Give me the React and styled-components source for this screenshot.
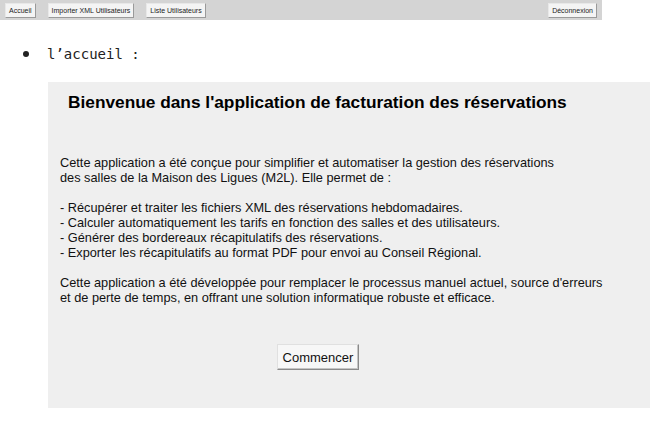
import React from "react";
import styled, { createGlobalStyle } from "styled-components";

const Global = createGlobalStyle`
  html, body { margin: 0; padding: 0; background: #ffffff; }
  body { font-family: "Liberation Sans", Arial, sans-serif; }
`;

const Toolbar = styled.div`
  width: 602px;
  height: 20px;
  background: #d4d4d4;
  display: flex;
  align-items: center;
  padding: 0 5px;
  box-sizing: border-box;
  gap: 12px;
`;

const NavButton = styled.button`
  font-family: "Liberation Sans", Arial, sans-serif;
  font-size: 7px;
  color: #222;
  background: #f4f4f4;
  border: 1px solid #9a9a9a;
  border-top-color: #e8e8e8;
  border-left-color: #e8e8e8;
  height: 15px;
  padding: 0 3px;
  margin-left: ${(p) => (p.$push ? "auto" : "0")};
  cursor: pointer;
`;

const BulletRow = styled.div`
  display: flex;
  align-items: center;
  margin: 24px 0 0 23px;
  height: 20px;
`;

const Dot = styled.span`
  width: 6px;
  height: 6px;
  border-radius: 50%;
  background: #222;
  margin-right: 18px;
`;

const BulletText = styled.span`
  font-family: "DejaVu Sans Mono", monospace;
  font-size: 14px;
  color: #222;
`;

const Panel = styled.div`
  margin: 18px 0 0 48px;
  width: 602px;
  height: 326px;
  background: #efefef;
  box-sizing: border-box;
  padding: 10px 12px 0 12px;
  display: flex;
  flex-direction: column;
`;

const Title = styled.h1`
  font-family: "Liberation Sans", Arial, sans-serif;
  font-size: 17.3px;
  font-weight: bold;
  color: #000;
  margin: 0 0 0 8px;
  line-height: 20px;
`;

const Body = styled.div`
  margin-top: 43px;
  font-family: "Liberation Sans", Arial, sans-serif;
  font-size: 12.75px;
  line-height: 15px;
  color: #111;
`;

const Para = styled.p`
  margin: 0 0 15px 0;
`;

const ButtonRow = styled.div`
  display: flex;
  padding-left: 217px;
  margin-top: 24px;
`;

const StartButton = styled.button`
  font-family: "Liberation Sans", Arial, sans-serif;
  font-size: 13px;
  color: #111;
  background: #f7f7f7;
  border: 1px solid #8a8a8a;
  border-top-color: #e0e0e0;
  border-left-color: #e0e0e0;
  box-shadow: inset -1px -1px 0 #c4c4c4;
  width: 82px;
  height: 26px;
  padding: 0;
`;

export default function App() {
  return (
    <>
      <Global />
      <Toolbar>
        <NavButton>Accueil</NavButton>
        <NavButton>Importer XML Utilisateurs</NavButton>
        <NavButton>Liste Utilisateurs</NavButton>
        <NavButton $push>Déconnexion</NavButton>
      </Toolbar>
      <BulletRow>
        <Dot />
        <BulletText>l’accueil :</BulletText>
      </BulletRow>
      <Panel>
        <Title>Bienvenue dans l'application de facturation des réservations</Title>
        <Body>
          <Para>
            Cette application a été conçue pour simplifier et automatiser la gestion des réservations
            <br />
            des salles de la Maison des Ligues (M2L). Elle permet de :
          </Para>
          <Para>
            - Récupérer et traiter les fichiers XML des réservations hebdomadaires.
            <br />
            - Calculer automatiquement les tarifs en fonction des salles et des utilisateurs.
            <br />
            - Générer des bordereaux récapitulatifs des réservations.
            <br />
            - Exporter les récapitulatifs au format PDF pour envoi au Conseil Régional.
          </Para>
          <Para>
            Cette application a été développée pour remplacer le processus manuel actuel, source d'erreurs
            <br />
            et de perte de temps, en offrant une solution informatique robuste et efficace.
          </Para>
        </Body>
        <ButtonRow>
          <StartButton>Commencer</StartButton>
        </ButtonRow>
      </Panel>
    </>
  );
}
